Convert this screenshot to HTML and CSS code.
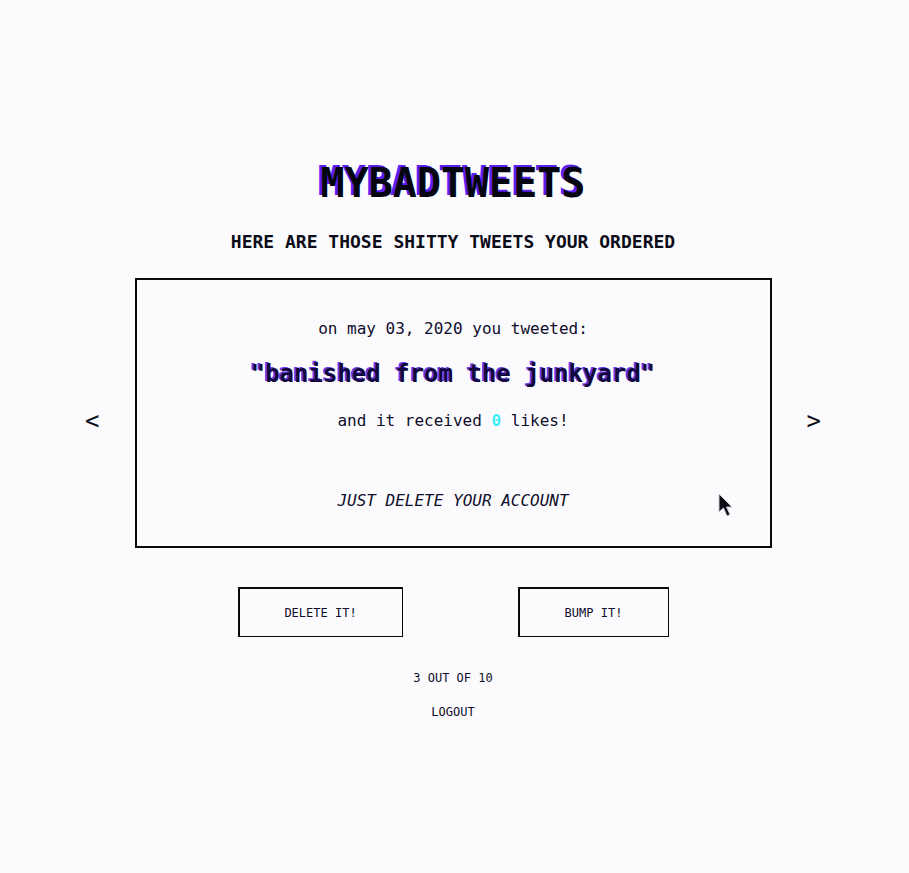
FILE: index.html
```html
<!DOCTYPE html>
<html>
<head>
<meta charset="utf-8">
<title>MyBadTweets</title>
<link rel="stylesheet" href="styles.css">
</head>
<body>
<main class="page">
  <h1 class="title">MYBADTWEETS</h1>
  <h2 class="subtitle">HERE ARE THOSE SHITTY TWEETS YOUR ORDERED</h2>
  <div class="carousel">
    <span class="arrow">&lt;</span>
    <section class="card">
      <p class="date">on may 03, 2020 you tweeted:</p>
      <p class="tweet">"banished from the junkyard"</p>
      <p class="likes">and it received <span class="count">0</span> likes!</p>
      <p class="verdict">JUST DELETE YOUR ACCOUNT</p>
      <svg class="cursor" width="16" height="26" viewBox="0 0 16 26">
        <path d="M1 1 L1 19 L5.5 15 L9 23 L12 21.5 L8.5 14 L14 14 Z" fill="#0c0c14" stroke="#c8c8d0" stroke-width="1"/>
      </svg>
    </section>
    <span class="arrow">&gt;</span>
  </div>
  <div class="actions">
    <button class="btn btn-delete">DELETE IT!</button>
    <button class="btn btn-bump">BUMP IT!</button>
  </div>
  <p class="progress">3 OUT OF 10</p>
  <p class="logout">LOGOUT</p>
</main>
</body>
</html>
```

FILE: styles.css
```css
html, body {
  margin: 0;
  padding: 0;
  background: #fbfbfe;
}
body {
  font-family: "DejaVu Sans Mono", "Liberation Mono", monospace;
  color: #0f0d2a;
}
.page {
  display: flex;
  flex-direction: column;
  align-items: center;
  padding: 159px 3px 0 0;
}
.title {
  margin: 0;
  font-size: 40px;
  line-height: 48px;
  font-weight: bold;
  color: #050510;
  text-shadow: -3px -2px 0 #5a1ff2;
}
.subtitle {
  margin: 23px 0 0;
  font-size: 18px;
  line-height: 24px;
  font-weight: bold;
  color: #0c0c18;
}
.carousel {
  margin-top: 24px;
  display: flex;
  align-items: center;
  gap: 35px;
}
.arrow {
  font-family: "DejaVu Sans Mono", monospace;
  font-size: 24px;
  font-weight: 200;
  line-height: 30px;
  color: #0c0c18;
  margin-top: 16px;
}
.card {
  position: relative;
  width: 633px;
  box-sizing: content-box;
  border: 2px solid #0a0a0a;
  padding: 37px 0 33px;
  display: flex;
  flex-direction: column;
  align-items: center;
}
.card p { margin: 0; }
.date {
  font-size: 16px;
  line-height: 24px;
}
.tweet {
  margin-top: 17px !important;
  font-size: 24px;
  line-height: 32px;
  font-weight: bold;
  color: #12083d;
  text-shadow: -2px -1px 0 #6a3cf0;
}
.likes {
  margin-top: 19px !important;
  font-size: 16px;
  line-height: 24px;
}
.count {
  color: #3ceef2;
  font-weight: bold;
}
.verdict {
  margin-top: 56px !important;
  font-size: 16px;
  line-height: 24px;
  font-style: italic;
}
.cursor {
  position: absolute;
  left: 581px;
  top: 213px;
}
.actions {
  margin-top: 39px;
  display: flex;
  gap: 115px;
}
.btn {
  height: 50px;
  padding: 0;
  background: transparent;
  border-style: solid;
  border-color: #0a0a0a;
  border-width: 2px 1px 1px 2px;
  font-family: "DejaVu Sans Mono", "Liberation Mono", monospace;
  font-size: 12px;
  color: #0f0d2a;
}
.btn-delete { width: 165px; }
.btn-bump { width: 151px; }
.progress {
  margin: 33px 0 0;
  font-size: 12px;
  line-height: 16px;
}
.logout {
  margin: 18px 0 0;
  font-size: 12px;
  line-height: 16px;
}
```
